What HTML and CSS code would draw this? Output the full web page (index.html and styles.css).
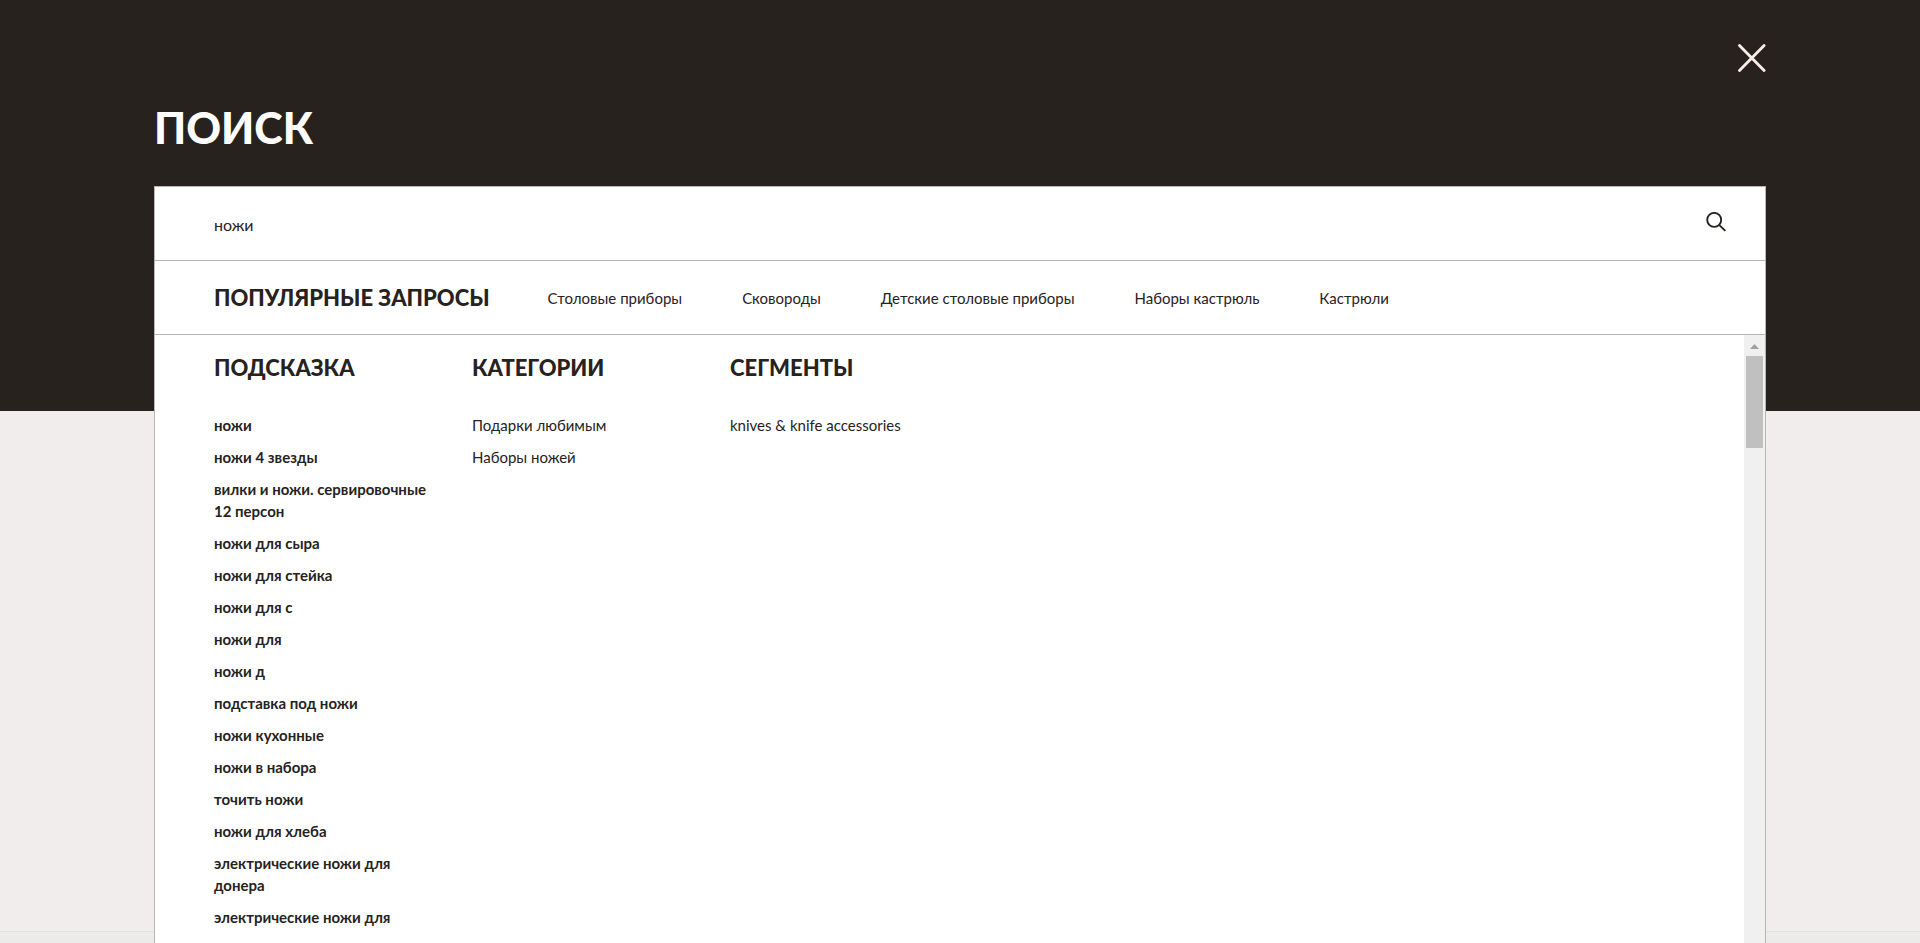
FILE: index.html
```html
<!DOCTYPE html>
<html lang="ru">
<head>
<meta charset="utf-8">
<title>Поиск</title>
<link rel="stylesheet" href="styles.css">
</head>
<body>
<main class="overlay">
  <header class="head">
    <button class="close" type="button" aria-label="Закрыть">
      <svg width="28" height="28" viewBox="0 0 28 28" fill="none" stroke="#fbeeea" stroke-width="2.8" stroke-linecap="round"><path d="M1.5 1.5l24.6 25M26.1 1.5l-24.6 25"/></svg>
    </button>
    <h1 class="title">ПОИСК</h1>
  </header>
  <section class="panel">
    <form class="search" role="search">
      <input class="field" type="text" value="ножи" aria-label="Поиск">
      <button class="submit" type="submit" aria-label="Найти">
        <svg width="20" height="20" viewBox="0 0 20 20" fill="none" stroke="#27221e" stroke-width="1.9"><circle cx="8.2" cy="7.9" r="7"/><path d="M13.1 12.9l6.2 6"/></svg>
      </button>
    </form>
    <nav class="popular">
      <h2 class="heading">ПОПУЛЯРНЫЕ ЗАПРОСЫ</h2>
      <div class="queries">
        <a href="#">Столовые приборы</a>
        <a href="#">Сковороды</a>
        <a href="#">Детские столовые приборы</a>
        <a href="#">Наборы кастрюль</a>
        <a href="#">Кастрюли</a>
      </div>
    </nav>
    <div class="results">
      <div class="columns">
        <section>
          <h2 class="heading">ПОДСКАЗКА</h2>
          <ul class="list hints">
            <li><a href="#">ножи</a></li>
            <li><a href="#">ножи 4 звезды</a></li>
            <li><a href="#">вилки и ножи. сервировочные 12 персон</a></li>
            <li><a href="#">ножи для сыра</a></li>
            <li><a href="#">ножи для стейка</a></li>
            <li><a href="#">ножи для с</a></li>
            <li><a href="#">ножи для</a></li>
            <li><a href="#">ножи д</a></li>
            <li><a href="#">подставка под ножи</a></li>
            <li><a href="#">ножи кухонные</a></li>
            <li><a href="#">ножи в набора</a></li>
            <li><a href="#">точить ножи</a></li>
            <li><a href="#">ножи для хлеба</a></li>
            <li><a href="#">электрические ножи для донера</a></li>
            <li><a href="#">электрические ножи для</a></li>
          </ul>
        </section>
        <section>
          <h2 class="heading">КАТЕГОРИИ</h2>
          <ul class="list">
            <li><a href="#">Подарки любимым</a></li>
            <li><a href="#">Наборы ножей</a></li>
          </ul>
        </section>
        <section>
          <h2 class="heading">СЕГМЕНТЫ</h2>
          <ul class="list">
            <li><a href="#">knives &amp; knife accessories</a></li>
          </ul>
        </section>
      </div>
      <div class="track" aria-hidden="true">
        <svg class="arrow" width="9" height="5" viewBox="0 0 9 5"><path d="M0 5L4.5 0L9 5z" fill="#a0a0a0"/></svg>
        <div class="thumb"></div>
      </div>
    </div>
  </section>
</main>
</body>
</html>
```
FILE: styles.css
```css
* { box-sizing: border-box; }

body {
  margin: 0;
  color: #27221e;
  font-family: Lato, "Open Sans", sans-serif;
  font-size: 15px;
  font-weight: 400;
  line-height: 22px;
}

h1, h2, ul { margin: 0; padding: 0; }
a { color: inherit; text-decoration: none; }
button { padding: 0; border: 0; background: none; cursor: pointer; }
svg { display: block; }

.overlay {
  display: flex;
  flex-direction: column;
  height: 100vh;
  padding: 0 154px;
  overflow: hidden;
  background: linear-gradient(#27221e 411px, #f0edec 411px, #f0edec calc(100% - 12px), #e3e0df calc(100% - 12px), #e3e0df calc(100% - 11px), #edebea calc(100% - 11px));
}

.head {
  display: flex;
  flex-direction: column;
  flex: none;
  height: 186px;
  padding-top: 44px;
}

.close { align-self: flex-end; }

.title {
  margin-top: 30px;
  color: #fff;
  font-size: 43px;
  font-weight: 900;
  line-height: 52px;
}

.panel {
  display: flex;
  flex-direction: column;
  flex: 1;
  min-height: 0;
  border: 1px solid #b8b5b4;
  border-bottom: 0;
  background: #fff;
}

.search, .popular {
  display: flex;
  align-items: center;
  flex: none;
  height: 74px;
  padding: 0 39px 0 59px;
  border-bottom: 1px solid #b8b5b4;
}

.field {
  flex: 1;
  min-width: 0;
  padding: 3px 0 0;
  border: 0;
  outline: 0;
  color: inherit;
  font: inherit;
  font-size: 16px;
}

.submit { padding-bottom: 4px; }
.heading { font-size: 22px; font-weight: 900; line-height: 28px; }
.popular { gap: 58px; }
.queries { display: flex; gap: 60px; }

.results { display: flex; flex: 1; min-height: 0; overflow: hidden; }

.columns {
  display: grid;
  grid-template-columns: 224px 224px 224px;
  gap: 34px;
  flex: 1;
  padding: 19px 0 0 59px;
}

.list {
  display: flex;
  flex-direction: column;
  gap: 10px;
  margin-top: 32px;
  list-style: none;
}

.hints { font-weight: 700; }

.track {
  display: flex;
  flex-direction: column;
  align-items: center;
  gap: 7px;
  width: 21px;
  padding-top: 9px;
  background: #f0f0f0;
}

.thumb { width: 17px; height: 92px; background: #c0c0c0; }
```
